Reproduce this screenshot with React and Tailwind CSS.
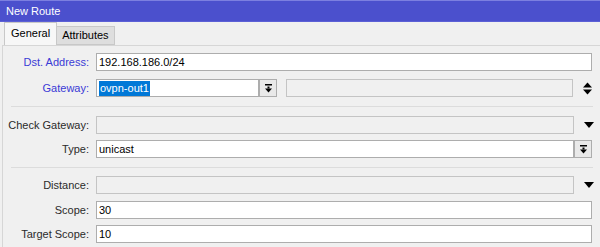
import React from "react";

function DropDownBtn() {
  return (
    <div className="flex h-[18px] w-[18px] shrink-0 items-center justify-center border border-[#adadad] bg-[#e9e9e9]">
      <svg width="9" height="9" viewBox="0 0 9 9">
        <rect x="1" y="0" width="7" height="1.5" fill="#000" />
        <rect x="3.5" y="2.5" width="2" height="2" fill="#000" />
        <path d="M1 4.5 H8 L4.5 8.5 Z" fill="#000" />
      </svg>
    </div>
  );
}

function DownArrow() {
  return (
    <svg width="10" height="6" viewBox="0 0 10 6" className="shrink-0">
      <path d="M0 0 H10 L5 6 Z" fill="#000" />
    </svg>
  );
}

function UpDown() {
  return (
    <svg width="9" height="13" viewBox="0 0 9 13" className="shrink-0">
      <path d="M0 5.5 H9 L4.5 0.5 Z" fill="#000" />
      <path d="M0 7.5 H9 L4.5 12.5 Z" fill="#000" />
    </svg>
  );
}

function Box({ value, disabled, w, children }) {
  return (
    <div
      className={
        "flex h-[18px] shrink-0 items-center border px-[2px] text-black " +
        (disabled ? "border-[#c4c4c4] bg-[#f0f0f0]" : "border-[#adadad] bg-white")
      }
      style={{ width: w }}
    >
      {children || value}
    </div>
  );
}

function Row({ label, blue, mt, children }) {
  return (
    <div className={"flex h-[18px] items-center " + mt}>
      <div className={"w-[86px] shrink-0 text-right " + (blue ? "text-[#3a3ad6]" : "text-[#2b2b2b]")}>
        {label}
      </div>
      <div className="ml-[7px] flex items-center">{children}</div>
    </div>
  );
}

export default function App() {
  return (
    <div className="h-[247px] w-[600px] overflow-hidden bg-[#f0f0f0] font-['Liberation_Sans',Arial,sans-serif] text-[11px] leading-none">
      <div className="flex h-[22px] items-center border-t border-[#7c7fe0] border-b border-b-[#5c60d6] bg-[#4b50cd] px-[6px] text-[11px] text-white">
        New Route
      </div>
      <div className="flex h-[23px] items-end pl-[4px]">
        <div className="flex h-[23px] items-center border border-b-0 border-[#c8c8c8] bg-[#f7f7f7] px-[6px] pb-[2px] text-black">
          General
        </div>
        <div className="flex h-[19px] items-center border border-l-0 border-[#c8c8c8] bg-[#dedede] px-[5px] text-black">
          Attributes
        </div>
      </div>
      <div className="ml-[2px] h-full border-l border-t border-[#d6d6d6] pt-[7px]">
        <Row label="Dst. Address:" blue mt="">
          <Box w={496} value="192.168.186.0/24" />
        </Row>
        <Row label="Gateway:" blue mt="mt-[8px]">
          <Box w={163}>
            <span className="bg-[#0078d7] px-[1px] py-[2px] text-white">ovpn-out1</span>
          </Box>
          <DropDownBtn />
          <div className="ml-[9px]">
            <Box w={287} disabled />
          </div>
          <div className="ml-[10px]">
            <UpDown />
          </div>
        </Row>
        <div className="ml-[8px] mt-[9px] h-px w-[582px] bg-[#dcdcdc]" />
        <Row label="Check Gateway:" mt="mt-[9px]">
          <Box w={478} disabled />
          <div className="ml-[10px]">
            <DownArrow />
          </div>
        </Row>
        <Row label="Type:" mt="mt-[6px]">
          <Box w={478} value="unicast" />
          <DropDownBtn />
        </Row>
        <div className="ml-[8px] mt-[9px] h-px w-[582px] bg-[#dcdcdc]" />
        <Row label="Distance:" mt="mt-[8px]">
          <Box w={478} disabled />
          <div className="ml-[10px]">
            <DownArrow />
          </div>
        </Row>
        <Row label="Scope:" mt="mt-[7px]">
          <Box w={496} value="30" />
        </Row>
        <Row label="Target Scope:" mt="mt-[6px]">
          <Box w={496} value="10" />
        </Row>
      </div>
    </div>
  );
}
